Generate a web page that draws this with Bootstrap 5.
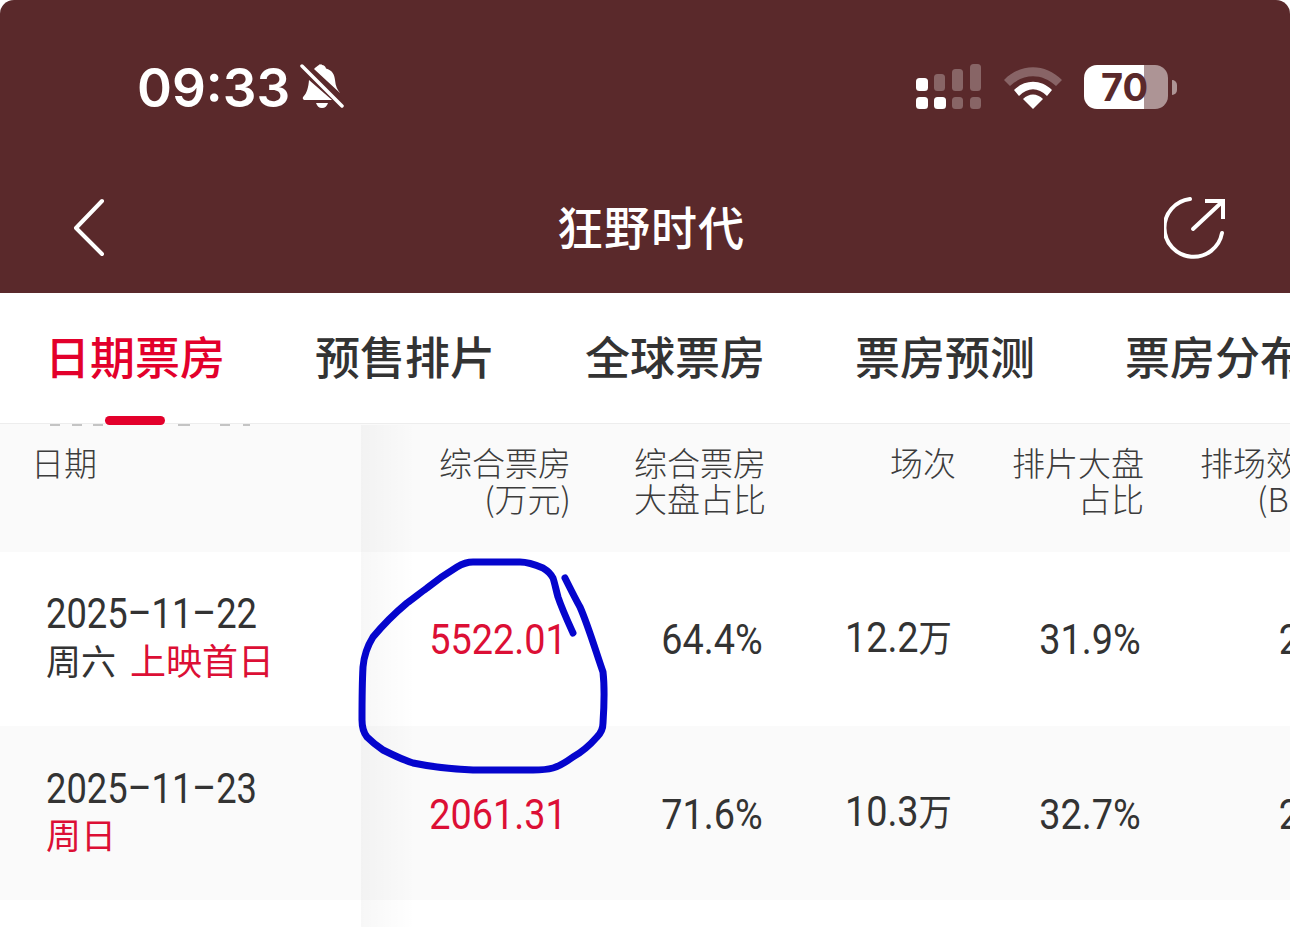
<!DOCTYPE html>
<html lang="zh-CN">
<head>
    <meta charset="UTF-8">
    <meta name="viewport" content="width=device-width, initial-scale=1.0">
    <title>狂野时代</title>
    <link rel="stylesheet" href="https://cdn.jsdelivr.net/npm/bootstrap@5.3.0/dist/css/bootstrap.min.css">
    <style>
        html, body {
            height: 927px;
            overflow: hidden;
        }
        body {
            background: #fff;
            font-family: Roboto, "Noto Sans CJK SC", sans-serif;
            color: #333;
        }
        .screen {
            position: relative;
            width: 1290px;
            height: 927px;
            overflow: hidden;
        }
        .top-head {
            height: 293px;
            background: #5a292b;
            color: #fff;
            border-radius: 14px 14px 0 0;
        }
        .status-row {
            height: 172px;
            padding: 2px 122px 0 137px;
        }
        .clock {
            font-family: Inter, sans-serif;
            font-size: 53px;
            font-weight: 600;
            line-height: 54px;
            margin-top: 2px;
            margin-right: 10px;
        }
        .title-row {
            height: 121px;
            padding: 0 64px 9px 72px;
        }
        .movie-title {
            font-family: "Noto Sans CJK SC", sans-serif;
            font-size: 46px;
            font-weight: 500;
            line-height: 56px;
            letter-spacing: 1px;
            margin-left: 32px;
            margin-bottom: 6px;
        }
        .sig-gap {
            margin-left: 22px;
        }
        .batt {
            position: relative;
            width: 84px;
            height: 44px;
            border-radius: 13px;
            margin-left: 22px;
            background: linear-gradient(90deg, #fff 0, #fff 60px, #ad9495 60px, #ad9495 100%);
            color: #5a292b;
            font-family: Inter, sans-serif;
            font-size: 38px;
            font-weight: 700;
            line-height: 44px;
            padding-left: 17px;
        }
        .batt::after {
            content: "";
            position: absolute;
            left: 88px;
            top: 15px;
            width: 5px;
            height: 15px;
            border-radius: 0 5px 5px 0;
            background: #ad9495;
        }
        .tab-bar {
            height: 131px;
            gap: 90px;
            padding: 0 0 4px 45px;
            border-bottom: 1px solid #ededed;
            font-family: "Noto Sans CJK SC", sans-serif;
            font-size: 45px;
            font-weight: 500;
            color: #333;
            white-space: nowrap;
            overflow: hidden;
        }
        .tab-on {
            color: #e3002b;
        }
        .tab-mark {
            position: absolute;
            left: 105px;
            top: 416px;
            width: 60px;
            height: 9px;
            border-radius: 5px;
            background: #e3002b;
        }
        .peek {
            position: absolute;
            left: 0;
            top: 424px;
        }
        .grid-wrap {
            white-space: nowrap;
        }
        .data-row {
            height: 174px;
            width: 1340px;
        }
        .head-row {
            height: 128px;
            width: 1340px;
            background: #fafafa;
            font-family: "Noto Sans CJK SC", sans-serif;
            font-size: 33px;
            font-weight: 300;
            line-height: 36px;
            color: #3c3c3c;
        }
        .row-alt {
            background: #fafafa;
        }
        .date-col {
            width: 361px;
            flex: none;
        }
        .head-row .date-col {
            padding-left: 31px;
            padding-top: 20px;
        }
        .head-row .num-col {
            padding-top: 20px;
        }
        .num-col {
            flex: none;
            text-align: right;
        }
        .c1 { width: 210px; }
        .c2 { width: 195px; }
        .c3 { width: 190px; }
        .c4 { width: 188px; }
        .c5 { width: 188px; }
        .bo-unit {
            margin-right: 9px;
        }
        .data-row .date-col {
            padding: 37px 0 0 46px;
        }
        .data-row .num-col {
            padding-top: 63px;
        }
        .row-alt .num-col {
            padding-top: 64px;
        }
        .row-alt .date-col {
            padding-top: 38px;
        }
        .data-row .c1 { width: 206px; }
        .data-row .c2 { width: 196px; }
        .data-row .c3 { width: 189px; padding-top: 61px; }
        .data-row .c4 { width: 189px; }
        .data-row .c5 { width: 190px; }
        .tall-num {
            display: inline-block;
            font-size: 42px;
            line-height: 50px;
            transform: scaleX(.9);
            transform-origin: right center;
        }
        .day-line {
            display: inline-block;
            font-size: 42px;
            line-height: 50px;
            transform: scaleX(.865);
            transform-origin: left center;
        }
        .wan {
            font-family: "Noto Sans CJK SC", sans-serif;
            font-size: 37px;
            line-height: 1;
        }
        .wk-line {
            font-family: "Noto Sans CJK SC", sans-serif;
            font-size: 35px;
            line-height: 46px;
            margin-top: -3px;
        }
        .hot {
            color: #dc0f35;
        }
        .first-day {
            margin-left: 14px;
            font-size: 36px;
        }
        .fix-shadow {
            position: absolute;
            left: 361px;
            top: 425px;
            width: 54px;
            height: 502px;
            background: linear-gradient(90deg, rgba(0, 0, 0, .03), rgba(0, 0, 0, 0));
        }
        .scribble {
            position: absolute;
            left: 0;
            top: 0;
        }
    </style>
</head>
<body>
    <div class="screen">
        <div class="top-head">
            <div class="status-row d-flex align-items-center justify-content-between">
                <div class="d-flex align-items-center">
                    <span class="clock">09:33</span>
                    <svg width="44" height="46" viewBox="0 0 44 46">
                        <path d="M22 1c2 0 3.500 1.500 4 3.500 6 1.500 8.500 6 9 11.500 .5 6 2.500 10 5 13l-26-24c2-2 4-3.500 5-4 .5-1.500 1.500-.5 3-.5z" fill="#fff"/>
                        <path d="M9 16 32 36H5c-2 0-3-2-1.500-3.500C7 29 8.500 23 9 16z" fill="#fff"/>
                        <path d="M16 39h12c-1 3-3 5-6 5s-5-2-6-5z" fill="#fff"/>
                        <path d="M3 1 43 41" stroke="#5a292b" stroke-width="7"/>
                        <path d="M2 2 42 42" stroke="#fff" stroke-width="3.500" stroke-linecap="round"/>
                    </svg>
                </div>
                <div class="d-flex align-items-center">
                    <svg width="66" height="46" viewBox="0 0 66 46">
                        <g fill="#fff">
                            <rect x="0" y="14" width="12" height="13" rx="3.500"/>
                            <rect x="0" y="33" width="12" height="12" rx="3.500"/>
                            <rect x="18" y="33" width="12" height="12" rx="3.500"/>
                        </g>
                        <g fill="#fff" opacity=".28">
                            <rect x="18" y="10" width="11" height="17" rx="3.500"/>
                            <rect x="36" y="5" width="11" height="22" rx="3.500"/>
                            <rect x="54" y="0" width="11" height="27" rx="3.500"/>
                            <rect x="36" y="33" width="11" height="12" rx="3.500"/>
                            <rect x="54" y="33" width="11" height="12" rx="3.500"/>
                        </g>
                    </svg>
                    <svg class="sig-gap" width="58" height="44" viewBox="0 0 58 44">
                        <path d="M0 15C17-2 41-2 58 15l-6 6C38 8 20 8 6 21z" fill="#fff" opacity=".28"/>
                        <path d="M10 25C21 14 37 14 48 25l-5 6C34 22 24 22 15 31z" fill="#fff"/>
                        <path d="M19 34c6-6 14-6 20 0L29 44z" fill="#fff"/>
                    </svg>
                    <div class="batt">70</div>
                </div>
            </div>
            <div class="title-row d-flex align-items-center justify-content-between">
                <svg width="34" height="60" viewBox="0 0 34 60">
                    <path d="M30 3 4 30l26 26" fill="none" stroke="#fff" stroke-width="4" stroke-linecap="round" stroke-linejoin="round"/>
                </svg>
                <span class="movie-title">狂野时代</span>
                <svg width="62" height="62" viewBox="0 0 62 62">
                    <path d="M26 2A29 29 0 1 0 58 36" fill="none" stroke="#fff" stroke-width="4" stroke-linecap="round"/>
                    <path d="M29 32 58 5" fill="none" stroke="#fff" stroke-width="4" stroke-linecap="round"/>
                    <path d="M41 4H59V22" fill="none" stroke="#fff" stroke-width="4"/>
                </svg>
            </div>
        </div>

        <div class="tab-bar d-flex align-items-center">
            <span class="tab-on">日期票房</span>
            <span>预售排片</span>
            <span>全球票房</span>
            <span>票房预测</span>
            <span>票房分布</span>
        </div>
        <svg class="peek" width="260" height="2" viewBox="0 0 260 2">
            <g fill="#c4c4c4">
                <rect x="50" width="10" height="2"/>
                <rect x="72" width="10" height="2"/>
                <rect x="93" width="10" height="2"/>
                <rect x="178" width="12" height="2"/>
                <rect x="220" width="10" height="2"/>
                <rect x="243" width="7" height="2"/>
            </g>
        </svg>
        <div class="tab-mark"></div>

        <div class="grid-wrap">
            <div class="d-flex head-row">
                <div class="date-col">日期</div>
                <div class="num-col c1">综合票房<br>(万元)</div>
                <div class="num-col c2">综合票房<br>大盘占比</div>
                <div class="num-col c3">场次</div>
                <div class="num-col c4">排片大盘<br>占比</div>
                <div class="num-col c5">排场效率<br><span class="bo-unit">(BO)</span></div>
            </div>
            <div class="d-flex data-row">
                <div class="date-col">
                    <div><span class="day-line">2025–11–22</span></div>
                    <div class="wk-line"><span>周六</span><span class="hot first-day">上映首日</span></div>
                </div>
                <div class="num-col c1"><span class="tall-num hot">5522.01</span></div>
                <div class="num-col c2"><span class="tall-num">64.4%</span></div>
                <div class="num-col c3"><span class="tall-num">12.2<span class="wan">万</span></span></div>
                <div class="num-col c4"><span class="tall-num">31.9%</span></div>
                <div class="num-col c5"><span class="tall-num">2.1</span></div>
            </div>
            <div class="d-flex data-row row-alt">
                <div class="date-col">
                    <div><span class="day-line">2025–11–23</span></div>
                    <div class="wk-line"><span class="hot">周日</span></div>
                </div>
                <div class="num-col c1"><span class="tall-num hot">2061.31</span></div>
                <div class="num-col c2"><span class="tall-num">71.6%</span></div>
                <div class="num-col c3"><span class="tall-num">10.3<span class="wan">万</span></span></div>
                <div class="num-col c4"><span class="tall-num">32.7%</span></div>
                <div class="num-col c5"><span class="tall-num">2.2</span></div>
            </div>
        </div>

        <div class="fix-shadow"></div>

        <svg class="scribble" width="1290" height="927" viewBox="0 0 1290 927">
            <path d="M565 578C571 590 576 600 580 607C588 625 596 652 603 672C605 690 604 708 603 723C603 729 601 733 597 737C590 745 582 752 573 757C566 762 560 766 553 768C546 770 540 770 533 770H473C452 769 432 767 413 763C403 760 393 755 383 750C377 746 372 742 367 737C363 732 362 726 362 720C362 702 362 685 363 667C364 655 368 645 373 637C383 625 395 613 407 603C414 598 420 593 427 588C437 580 447 573 457 567C462 564 467 562 473 562H520C529 562 536 565 543 568C548 571 551 574 553 578C555 584 556 590 558 597C562 609 568 622 573 633" fill="none" stroke="#0505cd" stroke-width="7" stroke-linecap="round" stroke-linejoin="round"/>
        </svg>
    </div>
    <script src="https://cdn.jsdelivr.net/npm/bootstrap@5.3.0/dist/js/bootstrap.bundle.min.js"></script>
</body>
</html>
